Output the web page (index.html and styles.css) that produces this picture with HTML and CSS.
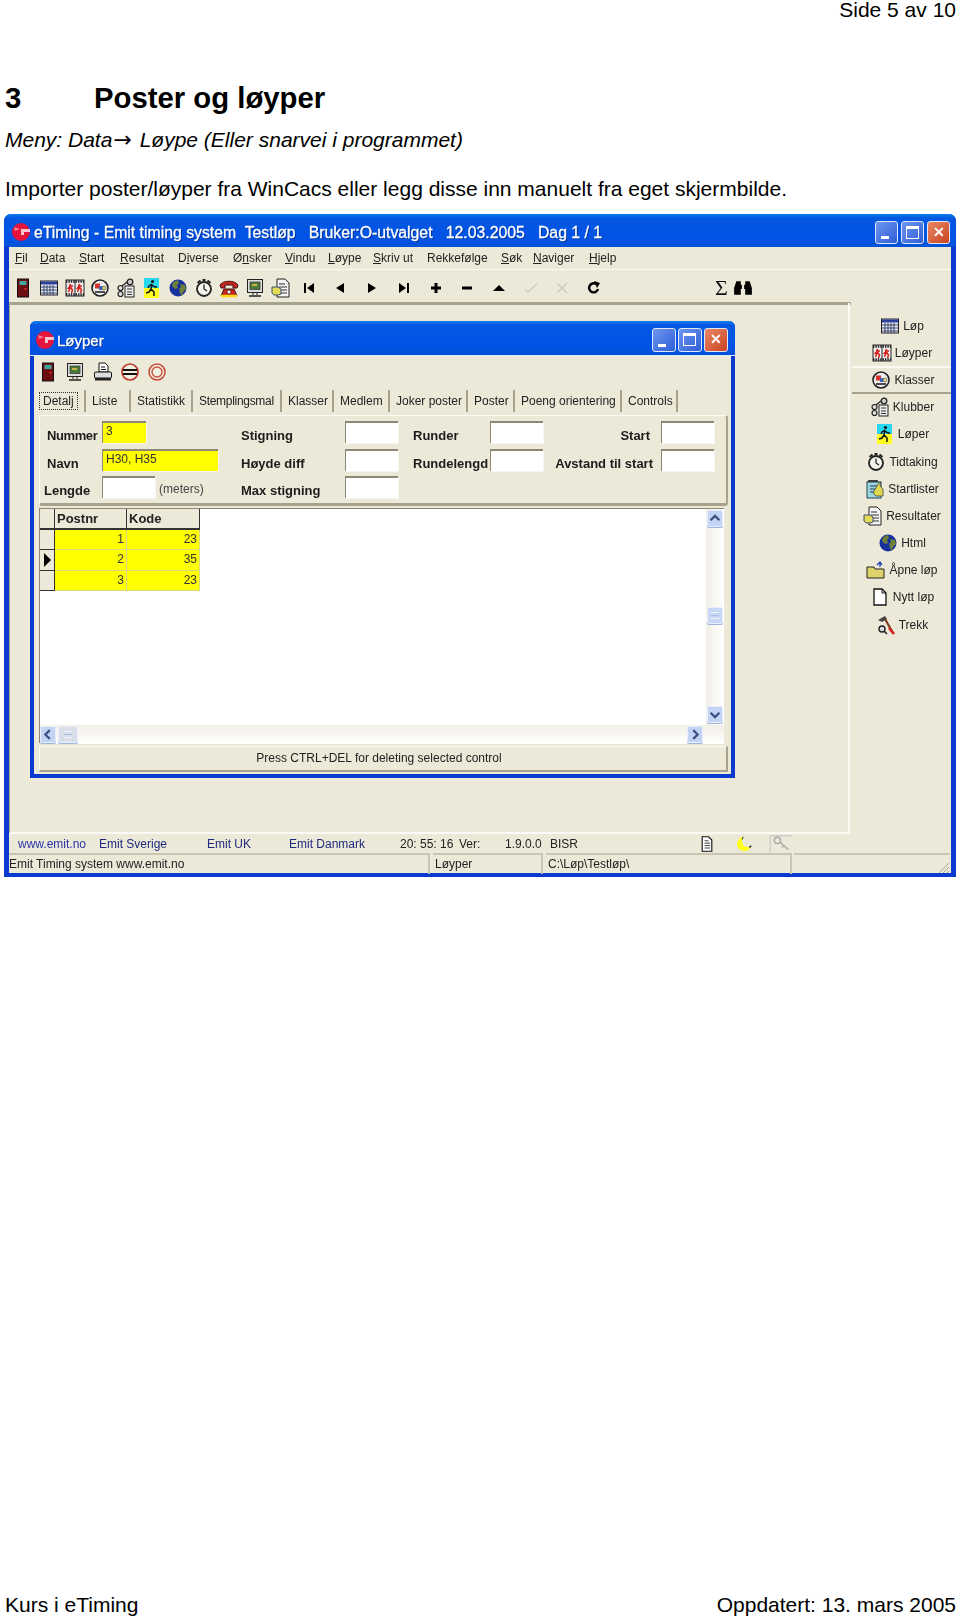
FILE: index.html
```html
<!DOCTYPE html>
<html lang="no">
<head>
<meta charset="utf-8">
<title>Side 5 av 10</title>
<link rel="stylesheet" href="styles.css">
</head>
<body>
<svg class="defs" width="0" height="0">
  <symbol id="i-door" viewBox="0 0 20 20"><rect x="4.500" y="1" width="11" height="18" fill="#6d0f12" stroke="#111"/><rect x="6.500" y="3" width="7" height="4" fill="#3fa7a0"/><rect x="11.500" y="10" width="2" height="1.500" fill="#e33"/></symbol>
  <symbol id="i-cal" viewBox="0 0 20 20"><rect x="1.500" y="3" width="17" height="14" fill="#eee" stroke="#222"/><rect x="2" y="3.500" width="16" height="3" fill="#2b3f9e"/><path d="M2 9h16M2 12h16M2 15h16M5 7v10M8 7v10M11 7v10M14 7v10" stroke="#33406f" fill="none"/></symbol>
  <symbol id="i-film" viewBox="0 0 20 20"><rect x="1" y="2" width="18" height="16" fill="#eee" stroke="#222"/><path d="M1 3.500h18M1 16.500h18" stroke="#222" stroke-width="2.600" stroke-dasharray="1.400 1"/><path d="M10 2v16" stroke="#222"/><path d="M5.500 6l-1 3-2 2M5.500 9l2 3-1 3M5.500 9l-2 5M4 8h4" stroke="#d3201c" stroke-width="1.500" fill="none"/><path d="M14.500 6l-1 3-2 2M14.500 9l2 3-1 3M14.500 9l-2 5M13 8h4" stroke="#d3201c" stroke-width="1.500" fill="none"/></symbol>
  <symbol id="i-class" viewBox="0 0 20 20"><circle cx="10" cy="10" r="8" fill="#eee" stroke="#222" stroke-width="1.600"/><rect x="5" y="5.500" width="5" height="5" fill="#d9332c"/><rect x="9" y="8" width="4" height="4" fill="#3f5fb8"/><circle cx="14" cy="10" r="2" fill="#d6d66a" stroke="#555" stroke-width=".6"/><path d="M5 14h10" stroke="#222" stroke-width="1.600"/></symbol>
  <symbol id="i-club" viewBox="0 0 20 20"><rect x="9" y="8" width="9" height="11" fill="#eee" stroke="#222"/><path d="M11 11h5M11 14h5M11 16.500h5" stroke="#333"/><circle cx="4.500" cy="10" r="2.500" fill="#ddd" stroke="#222" stroke-width="1.200"/><circle cx="4.500" cy="16" r="2.500" fill="#ddd" stroke="#222" stroke-width="1.200"/><circle cx="14" cy="4" r="2.800" fill="#ccc" stroke="#222" stroke-width="1.300"/><path d="M6 8l5-4" stroke="#222" stroke-width="1.300"/></symbol>
  <symbol id="i-run" viewBox="0 0 20 20"><rect x="2" y="0" width="15" height="10" fill="#28d7ee"/><rect x="2" y="10" width="15" height="10" fill="#ffff22"/><circle cx="10.500" cy="3.500" r="1.600" fill="#111"/><path d="M10 6l-1 5 3 3 0 4M9 11l-2 3-3 1M10 6l-3 2-1 2M10 7l3 2 2 0" stroke="#111" stroke-width="1.500" fill="none"/></symbol>
  <symbol id="i-globe" viewBox="0 0 20 20"><circle cx="10" cy="10" r="8.500" fill="#16309e"/><path d="M5 4l5-2 1 3-2 2 1 3-3 1-3-3zM12 6l5 1 1 4-3 3-1 4-2-3-1-4 2-2z" fill="#6f7f3a"/></symbol>
  <symbol id="i-watch" viewBox="0 0 20 20"><circle cx="10" cy="11" r="7" fill="#f4f4ee" stroke="#222" stroke-width="1.800"/><path d="M10 11V6.500M10 11l3 2" stroke="#222" stroke-width="1.300"/><path d="M3.500 5l3-2.500M16.500 5l-3-2.500M8.500 2h3" stroke="#222" stroke-width="2"/></symbol>
  <symbol id="i-phone" viewBox="0 0 20 20"><path d="M1 7c3-5 15-5 18 0l-1 3h-4V7H6v3H2z" fill="#c8281f" stroke="#411"/><path d="M5 11h10l3 7H2z" fill="#c8281f" stroke="#411"/><path d="M2 18h16" stroke="#ffd90f" stroke-width="2.500"/><circle cx="10" cy="14" r="2" fill="#eee" stroke="#411" stroke-width=".7"/></symbol>
  <symbol id="i-mon" viewBox="0 0 20 20"><rect x="2.500" y="1.500" width="15" height="13" fill="#ddd" stroke="#222"/><rect x="5" y="4" width="10" height="7.500" fill="#4c7a3a" stroke="#333" stroke-width=".7"/><rect x="7" y="6" width="5" height="2" fill="#c8b24a"/><path d="M8 15v2M12 15v2" stroke="#222"/><path d="M4 18h12" stroke="#222" stroke-width="1.500"/></symbol>
  <symbol id="i-dochand" viewBox="0 0 20 20"><path d="M6 1h8l4 4v14H6z" fill="#f4f4f4" stroke="#222"/><path d="M8 6h6M8 9h8M8 12h8M8 15h8" stroke="#333"/><path d="M1 9h6l3 2v5l-3 1H3l-2-2z" fill="#e3dc58" stroke="#38506a"/></symbol>
  <symbol id="i-startl" viewBox="0 0 20 20"><rect x="2" y="3" width="14" height="16" fill="#9cd8e0" stroke="#245"/><path d="M3 3l1-2 1 2 1-2 1 2 1-2 1 2 1-2 1 2 1-2 1 2" stroke="#222" fill="none"/><path d="M5 7h7M5 10h5M5 13h4" stroke="#335"/><path d="M8 14l5-9 3-2-1 4 3 3v7h-7z" fill="#dfd84f" stroke="#444" stroke-width=".8"/></symbol>
  <symbol id="i-print" viewBox="0 0 20 20"><path d="M6 1h6l3 3v6H6z" fill="#fff" stroke="#111"/><path d="M8 5h4M8 7.500h5" stroke="#111"/><rect x="1.500" y="10" width="17" height="6" rx="1" fill="#ddd" stroke="#111"/><rect x="2" y="16" width="16" height="2.500" fill="#222"/></symbol>
  <symbol id="i-stop1" viewBox="0 0 20 20"><circle cx="10" cy="10" r="8" fill="#f2efe0" stroke="#b83c2d" stroke-width="1.700"/><path d="M3 8h14M3 12h14" stroke="#111" stroke-width="2"/></symbol>
  <symbol id="i-stop2" viewBox="0 0 20 20"><circle cx="10" cy="10" r="8" fill="#f2efe0" stroke="#c4513f" stroke-width="1.600"/><circle cx="10" cy="10" r="5" fill="none" stroke="#c4513f" stroke-width="1.400"/></symbol>
  <symbol id="i-folder" viewBox="0 0 20 20"><path d="M1 7h7l1 2h9v9H1z" fill="#ddd36a" stroke="#222"/><path d="M11 5l3-3 2 3M14 2v5" stroke="#1e3fae" fill="none" stroke-width="1.300"/></symbol>
  <symbol id="i-new" viewBox="0 0 20 20"><path d="M4 2h8l4 4v12H4z" fill="#fff" stroke="#111" stroke-width="1.300"/><path d="M12 2v4h4" fill="none" stroke="#111"/></symbol>
  <symbol id="i-trekk" viewBox="0 0 20 20"><path d="M2 5l7-4 2 3-5 3z" fill="#444"/><path d="M9 4l8 14" stroke="#7a3b1c" stroke-width="2.200"/><path d="M13 13l5 6" stroke="#d3201c" stroke-width="2.600"/><circle cx="6" cy="14" r="3" fill="#ddd" stroke="#222" stroke-width="1.400"/><path d="M8 16l3 3" stroke="#222" stroke-width="1.600"/></symbol>
  <symbol id="i-doc" viewBox="0 0 20 20"><path d="M4 1h8l4 4v14H4z" fill="#fff" stroke="#111" stroke-width="1.400"/><path d="M7 6h5M7 9h7M7 12h7M7 15h7" stroke="#111"/></symbol>
  <symbol id="i-logo" viewBox="0 0 20 20"><circle cx="10" cy="10" r="9" fill="#e4143c"/><path d="M10 7h9v3h-6v3h-3z" fill="#fff" opacity=".75"/><path d="M3 5l6 2-5 2z" fill="#ff7a90"/></symbol>
</svg>

<header class="page-head">Side 5 av 10</header>
<h1 class="heading"><span class="heading-no">3</span><span>Poster og løyper</span></h1>
<p class="menu-path">Meny: Data<span class="arrow">→</span> Løype (Eller snarvei i programmet)</p>
<p class="intro">Importer poster/løyper fra WinCacs eller legg disse inn manuelt fra eget skjermbilde.</p>

<div class="app">
  <div class="titlebar">
    <svg class="logo"><use href="#i-logo"/></svg>
    <span class="title-text">eTiming - Emit timing system&nbsp; Testløp&nbsp;&nbsp; Bruker:O-utvalget&nbsp;&nbsp; 12.03.2005&nbsp;&nbsp; Dag 1 / 1</span>
    <div class="caption">
      <span class="cap-btn"><i class="g-min"></i></span>
      <span class="cap-btn"><i class="g-max"></i></span>
      <span class="cap-btn cap-close">✕</span>
    </div>
  </div>

  <nav class="menubar">
    <span><u>F</u>il</span><span><u>D</u>ata</span><span><u>S</u>tart</span><span><u>R</u>esultat</span><span>D<u>i</u>verse</span><span>Ø<u>n</u>sker</span><span><u>V</u>indu</span><span><u>L</u>øype</span><span><u>S</u>kriv ut</span><span>Rekkefølge</span><span><u>S</u>øk</span><span><u>N</u>aviger</span><span><u>H</u>jelp</span>
  </nav>

  <div class="toolbar">
    <svg class="tb"><use href="#i-door"/></svg>
    <svg class="tb"><use href="#i-cal"/></svg>
    <svg class="tb"><use href="#i-film"/></svg>
    <svg class="tb"><use href="#i-class"/></svg>
    <svg class="tb"><use href="#i-club"/></svg>
    <svg class="tb"><use href="#i-run"/></svg>
    <svg class="tb"><use href="#i-globe"/></svg>
    <svg class="tb"><use href="#i-watch"/></svg>
    <svg class="tb"><use href="#i-phone"/></svg>
    <svg class="tb"><use href="#i-mon"/></svg>
    <svg class="tb"><use href="#i-dochand"/></svg>
    <div class="nav-btns">
      <svg viewBox="0 0 16 16"><path d="M3 3h2v10H3zM13 3v10L6 8z"/></svg>
      <svg viewBox="0 0 16 16"><path d="M12 3v10L4 8z"/></svg>
      <svg viewBox="0 0 16 16"><path d="M4 3v10l8-5z"/></svg>
      <svg viewBox="0 0 16 16"><path d="M11 3h2v10h-2zM3 3v10l7-5z"/></svg>
      <svg viewBox="0 0 16 16"><path d="M6.500 3h3v3.500H13v3H9.500V13h-3V9.500H3v-3h3.500z"/></svg>
      <svg viewBox="0 0 16 16"><path d="M3 6.500h10v3H3z"/></svg>
      <svg viewBox="0 0 16 16"><path d="M2 11L8 5l6 6z"/></svg>
      <svg viewBox="0 0 16 16" class="dim"><path d="M2 9l3 3 9-8" fill="none" stroke="#cfcdc0" stroke-width="1.500"/></svg>
      <svg viewBox="0 0 16 16" class="dim"><path d="M3 3l10 10M13 3L3 13" fill="none" stroke="#cfcdc0" stroke-width="1.500"/></svg>
      <svg viewBox="0 0 16 16"><path d="M12 9a4.500 4.500 0 1 1-2-5" fill="none" stroke="#000" stroke-width="2.400"/><path d="M8 1l6 2-3 5z"/></svg>
    </div>
    <span class="sigma">Σ</span>
    <svg class="binoc" viewBox="0 0 18 16"><path d="M3 2h4v3h1v4H7v5H1V8zM15 2h-4v3h-1v4h1v5h6V8z"/></svg>
  </div>

  <div class="workspace">
    <div class="mdi">
      <section class="child">
        <div class="child-title">
          <svg class="logo"><use href="#i-logo"/></svg>
          <span class="child-name">Løyper</span>
          <div class="caption caption-child">
            <span class="cap-btn"><i class="g-min"></i></span>
            <span class="cap-btn"><i class="g-max"></i></span>
            <span class="cap-btn cap-close">✕</span>
          </div>
        </div>
        <div class="child-tools">
          <svg><use href="#i-door"/></svg>
          <svg><use href="#i-mon"/></svg>
          <svg><use href="#i-print"/></svg>
          <svg><use href="#i-stop1"/></svg>
          <svg><use href="#i-stop2"/></svg>
        </div>
        <div class="tabs">
          <span class="tab"><b class="tab-active">Detalj</b></span><span class="tab">Liste</span><span class="tab">Statistikk</span><span class="tab tab-tight">Stemplingsmal</span><span class="tab">Klasser</span><span class="tab">Medlem</span><span class="tab">Joker poster</span><span class="tab">Poster</span><span class="tab">Poeng orientering</span><span class="tab">Controls</span>
        </div>
        <div class="form">
          <label class="lbl lbl-in lbl-tight">Nummer</label>
          <div class="cell"><span class="field f-num yellow">3</span></div>
          <label class="lbl">Stigning</label>
          <span class="field"></span>
          <label class="lbl lbl-r3">Runder</label>
          <span class="field"></span>
          <label class="lbl lbl-end lbl-start">Start</label>
          <span class="field"></span>

          <label class="lbl lbl-in">Navn</label>
          <div class="cell"><span class="field f-name yellow">H30, H35</span></div>
          <label class="lbl">Høyde diff</label>
          <span class="field"></span>
          <label class="lbl lbl-r3">Rundelengd</label>
          <span class="field"></span>
          <label class="lbl lbl-end">Avstand til start</label>
          <span class="field"></span>

          <label class="lbl">Lengde</label>
          <div class="cell"><span class="field f-len"></span><span class="unit">(meters)</span></div>
          <label class="lbl">Max stigning</label>
          <span class="field"></span>
        </div>

        <div class="gridbox">
          <div class="grid-main">
            <div class="grid-area">
              <div class="dgrid">
                <span class="hd"></span><span class="hd">Postnr</span><span class="hd">Kode</span>
                <span class="ind"></span><span class="c">1</span><span class="c">23</span>
                <span class="ind ind-cur"><i></i></span><span class="c">2</span><span class="c">35</span>
                <span class="ind"></span><span class="c">3</span><span class="c">23</span>
              </div>
            </div>
            <div class="vscroll">
              <span class="sb-btn"><svg viewBox="0 0 16 16"><path d="M3 10l5-5 5 5" /></svg></span>
              <span class="sb-thumb sb-thumb-v"><em></em></span>
              <span class="sb-btn"><svg viewBox="0 0 16 16"><path d="M3 6l5 5 5-5" /></svg></span>
            </div>
          </div>
          <div class="hscroll">
            <span class="sb-btn"><svg viewBox="0 0 16 16"><path d="M10 3L5 8l5 5" /></svg></span>
            <span class="sb-thumb sb-thumb-h"><em></em></span>
            <span class="sb-btn"><svg viewBox="0 0 16 16"><path d="M6 3l5 5-5 5" /></svg></span>
          </div>
        </div>
        <div class="child-status">Press CTRL+DEL for deleting selected control</div>
      </section>
    </div>

    <aside class="side">
      <div class="side-item"><svg><use href="#i-cal"/></svg>Løp</div>
      <div class="side-item"><svg><use href="#i-film"/></svg>Løyper</div>
      <div class="side-item side-on"><svg><use href="#i-class"/></svg>Klasser</div>
      <div class="side-item"><svg><use href="#i-club"/></svg>Klubber</div>
      <div class="side-item"><svg><use href="#i-run"/></svg>Løper</div>
      <div class="side-item"><svg><use href="#i-watch"/></svg>Tidtaking</div>
      <div class="side-item"><svg><use href="#i-startl"/></svg>Startlister</div>
      <div class="side-item"><svg><use href="#i-dochand"/></svg>Resultater</div>
      <div class="side-item"><svg><use href="#i-globe"/></svg>Html</div>
      <div class="side-item"><svg><use href="#i-folder"/></svg>Åpne løp</div>
      <div class="side-item"><svg><use href="#i-new"/></svg>Nytt løp</div>
      <div class="side-item"><svg><use href="#i-trekk"/></svg>Trekk</div>
    </aside>
  </div>

  <div class="linkrow">
    <span class="l1 link">www.emit.no</span>
    <span class="l2 link">Emit Sverige</span>
    <span class="l3 link">Emit UK</span>
    <span class="l4 link">Emit Danmark</span>
    <span class="l5">20: 55: 16</span>
    <span class="l6">Ver:</span>
    <span class="l7">1.9.0.0</span>
    <span class="l8">BISR</span>
    <svg class="st-doc"><use href="#i-doc"/></svg>
    <svg class="st-moon" viewBox="0 0 20 20"><path d="M9 2a8 8 0 1 0 9 10c-3 3-9 1-10-3-.5-3 0-5 1-7z" fill="#ffff1e"/><path d="M16 14l2-2" stroke="#222" stroke-width="1.500"/><path d="M9 2l-1 3" stroke="#222"/></svg>
    <svg class="st-key" viewBox="0 0 26 20"><path d="M1 1h24M1 1v18" stroke="#bbb" fill="none"/><circle cx="9" cy="6" r="3.500" fill="none" stroke="#aaa" stroke-width="1.500"/><path d="M12 8l9 8M16 12l-2 2" stroke="#aaa" stroke-width="1.500"/></svg>
  </div>

  <div class="statusbar">
    <span class="s1">Emit Timing system www.emit.no</span>
    <span class="s2">Løyper</span>
    <span class="s3">C:\Løp\Testløp\</span>
    <span class="s4"><svg class="grip" viewBox="0 0 14 14"><path d="M13 3L3 13M13 7l-6 6M13 11l-2 2" stroke="#a9a690" fill="none"/></svg></span>
  </div>
</div>

<footer class="page-foot"><span>Kurs i eTiming</span><span>Oppdatert: 13. mars 2005</span></footer>
</body>
</html>
```

FILE: styles.css
```css
* { box-sizing: border-box; }
html, body { margin: 0; padding: 0; }
body {
  width: 960px;
  height: 1616px;
  display: flex;
  flex-direction: column;
  background: #fff;
  color: #000;
  font-family: "Liberation Sans", Arial, sans-serif;
  overflow: hidden;
}
.defs { position: absolute; }

.page-head { flex: none; height: 21px; padding-right: 4px; text-align: right; font-size: 21px; line-height: 19px; }
.heading { flex: none; display: flex; margin: 59px 0 0; padding-left: 5px; height: 36px; font-size: 29.300px; line-height: 36px; font-weight: 700; }
.heading-no { width: 89px; }
.menu-path { flex: none; margin: 11px 0 0; padding-left: 5px; height: 25px; font-size: 21px; line-height: 25px; font-style: italic; }
.arrow { font-family: "DejaVu Sans", sans-serif; font-style: normal; font-size: 22px; line-height: 0; margin: 0 2px 0 1px; }
.intro { flex: none; margin: 24px 0 12px; padding-left: 5px; height: 26px; font-size: 21px; line-height: 26px; }

/* application window */
.app {
  flex: none;
  margin: 0 4px;
  width: 952px;
  height: 663px;
  display: flex;
  flex-direction: column;
  background: #ece9d8;
  border: solid #0a3ad0;
  border-width: 0 5px 4px;
  border-radius: 7px 7px 0 0;
  font-size: 12px;
  color: #222;
  filter: blur(.35px);
}
.titlebar {
  flex: none;
  margin: 0 -5px;
  height: 33px;
  display: flex;
  align-items: center;
  padding: 3px 6px 0 7px;
  border-radius: 7px 7px 0 0;
  background: linear-gradient(#0a7ff0 0, #0458e0 12%, #0053e6 70%, #0452d8 100%);
  color: #fff;
  font-size: 15.800px;
  white-space: pre;
  text-shadow: 1px 1px 0 #02308f;
}
.logo { width: 20px; height: 20px; flex: none; }
.title-text { margin: 2px 0 0 3px; -webkit-text-stroke: .3px #fff; }
.caption { margin-left: auto; display: flex; gap: 3px; }
.cap-btn {
  width: 23px;
  height: 23px;
  border: 1px solid #dfe8fb;
  border-radius: 3px;
  background: linear-gradient(135deg, #6f95ee, #2f5fd8);
  position: relative;
  color: #fff;
  font-size: 14px;
  font-weight: 700;
  line-height: 21px;
  text-align: center;
  text-shadow: none;
}
.cap-close { background: linear-gradient(135deg, #e88a68, #c9431f); }
.g-min { position: absolute; left: 5px; bottom: 4px; width: 8px; height: 3px; background: #fff; }
.g-max { position: absolute; left: 4px; top: 4px; width: 13px; height: 13px; border: 1px solid #fff; border-top-width: 3px; }

.menubar {
  flex: none;
  height: 23px;
  display: grid;
  grid-template-columns: 25px 39px 41px 58px 55px 52px 43px 45px 54px 74px 32px 56px auto;
  align-items: center;
  padding-left: 6px;
  border-bottom: 1px solid #fbfaf4;
  white-space: nowrap;
}

.toolbar {
  flex: none;
  height: 35px;
  display: flex;
  align-items: center;
  padding: 3px 0 0 3px;
  border-bottom: 3px solid #a6a28c;
  margin-right: 100px;
}
.tb { width: 22px; height: 20px; margin-right: 3.800px; flex: none; }
.nav-btns { display: flex; margin-left: 5px; gap: 15.700px; }
.nav-btns svg { width: 16px; height: 16px; flex: none; }
.sigma { margin-left: 113px; font-family: "Liberation Serif", serif; font-size: 22px; line-height: 20px; color: #111; }
.binoc { width: 20px; height: 18px; margin-left: 5px; }

.workspace { flex: none; height: 531px; display: flex; margin-top: -2px; }
.mdi {
  width: 841px;
  padding: 18px 0 0 20px;
  border-left: 1px solid #a6a28c;
  border-right: 2px solid #fbfaf4;
  border-bottom: 2px solid #fbfaf4;
}
.side { flex: 1; padding-top: 9px; display: flex; flex-direction: column; }
.side-item {
  flex: none;
  height: 27.200px;
  display: flex;
  align-items: center;
  justify-content: center;
  gap: 3px;
  padding-left: 3px;
  white-space: nowrap;
}
.side-item svg { width: 20px; height: 20px; flex: none; }
.side-on { margin-left: 2px; border-top: 2px solid #fbfaf4; border-bottom: 2px solid #a6a28c; }

/* child window */
.child {
  width: 705px;
  height: 457px;
  display: flex;
  flex-direction: column;
  background: #ece9d8;
  border: solid #0a3ad0;
  border-width: 0 4px 4px;
  border-radius: 6px 6px 0 0;
}
.child-title {
  flex: none;
  margin: 0 -4px;
  height: 35px;
  display: flex;
  align-items: center;
  padding: 3px 7px 0 5px;
  border-radius: 6px 6px 0 0;
  background: linear-gradient(#0a7ff0 0, #0458e0 12%, #0053e6 75%, #0452d8 100%);
  border-bottom: 1px solid #dfe8fb;
}
.child-name { margin: 2px 0 0 2px; color: #fff; font-size: 15px; -webkit-text-stroke: .3px #fff; text-shadow: 1px 1px 0 #02308f; }
.caption-child { gap: 2px; }
.caption-child .cap-btn { width: 24px; height: 24px; }
.child-tools { flex: none; height: 34px; display: flex; align-items: center; padding: 0 0 2px 4px; gap: 7.300px; }
.child-tools svg { width: 20px; height: 20px; flex: none; }

.tabs {
  flex: none;
  height: 25px;
  display: grid;
  grid-template-columns: 52px 45px 62px 89px 52px 56px 78px 47px 107px 56px;
  align-items: start;
  white-space: nowrap;
}
.tab { height: 22px; line-height: 23px; padding-left: 6px; border-right: 2px solid #a6a28c; }
.tab-tight { letter-spacing: -.3px; }
.tab-active { font-weight: 400; margin-left: -1px; padding: 1px 3px; border: 1px dotted #333; }

.form {
  flex: none;
  margin-left: 5px;
  width: 689px;
  height: 91px;
  display: grid;
  grid-template-columns: 58px 139px 104px 53px 92px 53px 118px 53px;
  grid-auto-rows: 27.500px;
  align-items: start;
  padding: 5px 0 0 4px;
  background: #ece9d8;
  border: solid;
  border-width: 1px 2px 3px 1px;
  border-color: #fbfaf4 #a6a28c #a6a28c #fbfaf4;
  border-radius: 3px;
}
.lbl { height: 22px; line-height: 30px; font-size: 13px; font-weight: 700; color: #1c1c1c; white-space: nowrap; }
.lbl-in { padding-left: 3px; }
.lbl-tight { letter-spacing: -.4px; }
.lbl-r3 { padding-left: 15px; }
.lbl-end { text-align: right; padding-right: 8px; }
.lbl-start { padding-right: 11px; }
.cell { display: flex; align-items: flex-start; }
.field {
  display: block;
  width: 53px;
  height: 22px;
  padding: 0 3px;
  background: #fff;
  border: solid #8c8875;
  border-width: 2px 0 0 1px;
  box-shadow: 1px 1px 0 #f8f7ef;
  line-height: 17px;
  color: #333;
}
.yellow { background: #ffff00; }
.f-num { width: 44px; }
.f-name { width: 116px; }
.f-len { width: 53px; }
.unit { margin: 6px 0 0 4px; color: #444; white-space: nowrap; }

.gridbox { flex: none; margin: 2px 0 0 5px; width: 685px; height: 235px; background: #ece9d8; border-left: 1px solid #8c8875; border-top: 1px solid #8c8875; }
.grid-main { height: 216px; display: flex; }
.grid-area { flex: 1; background: #fff; }
.dgrid { display: grid; grid-template-columns: 15px 72px 73px; grid-template-rows: 21px 20px 21px 20px; width: 160px; }
.hd { background: #ece9d8; border-right: 1px solid #333; border-bottom: 2px solid #333; font-weight: 700; font-size: 13px; line-height: 20px; padding-left: 2px; }
.c { background: #ffff00; border-right: 1px solid #d8d880; border-bottom: 1px solid #d8d880; text-align: right; padding-right: 2px; line-height: 19px; color: #333; }
.ind { background: #ece9d8; border-right: 1px solid #333; border-bottom: 1px solid #333; position: relative; }
.ind-cur i { position: absolute; left: 4px; top: 3px; width: 0; height: 0; border-left: 7px solid #000; border-top: 7px solid transparent; border-bottom: 7px solid transparent; }

.vscroll { flex: none; width: 18px; display: flex; flex-direction: column; justify-content: space-between; padding: 1px 0 2px 1px; background: linear-gradient(90deg, #f1efe6, #fff); }
.hscroll { height: 19px; display: flex; align-items: center; padding-right: 21px; background: linear-gradient(#f1efe6, #fff); }
.sb-btn { flex: none; display: block; width: 16px; height: 17px; border-radius: 2px; background: #c3d3f3; border: 1px solid #e9effb; box-shadow: 0 1px 0 #9fb4dc; }
.sb-btn svg { display: block; width: 14px; height: 15px; fill: none; stroke: #3a4f80; stroke-width: 2.500; }
.sb-thumb { flex: none; display: flex; align-items: center; justify-content: center; width: 16px; height: 17px; border-radius: 2px; background: #c8d7f5; border: 1px solid #e9effb; box-shadow: 0 1px 0 #9fb4dc; }
.sb-thumb em { display: block; width: 8px; height: 7px; border-top: 1px solid #eef3fd; border-bottom: 1px solid #eef3fd; background: linear-gradient(#a9bde6 0 0) center / 100% 1px no-repeat; }
.sb-thumb-v { margin-bottom: 3px; }
.sb-thumb-h { margin: 0 auto 0 2px; width: 20px; background: #d9dfe9; }

.child-status {
  flex: none;
  margin: 3px 0 0 5px;
  width: 689px;
  height: 26px;
  text-align: center;
  line-height: 23px;
  padding-right: 8px;
  color: #222;
  border: solid;
  border-width: 1px 2px 2px 1px;
  border-color: #fbfaf4 #a6a28c #a6a28c #fbfaf4;
}

/* bottom rows */
.linkrow { flex: none; height: 19px; display: flex; align-items: center; padding-top: 1px; white-space: nowrap; }
.linkrow span { flex: none; line-height: 19px; }
.link { color: #1e2a80; }
.l1 { width: 90px; padding-left: 9px; color: #2a35a8; }
.l2 { width: 108px; }
.l3 { width: 82px; }
.l4 { width: 111px; }
.l5 { width: 59px; }
.l6 { width: 46px; }
.l7 { width: 45px; }
.l8 { width: 149px; }
.st-doc { width: 16px; height: 16px; flex: none; }
.st-moon { width: 20px; height: 18px; flex: none; margin-left: 19px; }
.st-key { width: 26px; height: 18px; flex: none; margin-left: 14px; }

.statusbar { flex: 1; display: flex; white-space: nowrap; line-height: 19px; }
.statusbar span { display: block; border-top: 2px solid #c8c5b0; border-right: 2px solid #c8c5b0; height: 100%; flex: none; }
.s1 { width: 421px; }
.s2 { width: 110px; margin-left: 3px; padding-left: 2px; }
.s3 { width: 246px; margin-left: 3px; padding-left: 2px; }
.s4 { width: 156px; margin-left: 2px; position: relative; border-right: 0 !important; }
.grip { position: absolute; right: 0; bottom: 0; width: 14px; height: 14px; }

.page-foot { flex: none; margin-top: auto; padding: 0 4px 0 5px; height: 21px; display: flex; justify-content: space-between; font-size: 21px; line-height: 19px; }
```
